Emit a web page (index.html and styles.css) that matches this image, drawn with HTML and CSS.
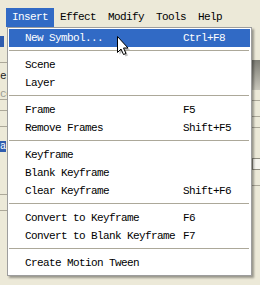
FILE: index.html
```html
<!DOCTYPE html>
<html lang="en">
<head>
    <meta charset="UTF-8">
    <title>Insert Menu</title>
    <link rel="stylesheet" href="styles.css">
</head>
<body>

    <div class="app">
        <!-- Menu bar -->
        <div class="menubar">
            <span class="active">Insert</span>
            <span>Effect</span>
            <span>Modify</span>
            <span>Tools</span>
            <span>Help</span>
        </div>

        <!-- What shows of the window behind the menu -->
        <div class="workspace">
            <div class="left-pane">
                <div class="tab"></div>
                <div class="edge-line"></div>
                <div class="edge-text">e</div>
                <div class="edge-text dim">ce</div>
                <div class="edge-line gap"></div>
                <div class="edge-line"></div>
                <div class="tab second">a</div>
                <div class="edge-line far"></div>
                <div class="edge-line"></div>
            </div>
            <div class="right-pane">
                <div class="shade"></div>
                <div class="edge-line gap"></div>
                <div class="edge-line"></div>
                <div class="edge-line gap"></div>
                <div class="edge-box"></div>
                <div class="edge-line"></div>
            </div>
        </div>

        <!-- Insert dropdown -->
        <div class="dropdown">
            <div class="item selected"><span class="label">New Symbol...</span><span class="key">Ctrl+F8</span></div>
            <div class="sep"></div>
            <div class="item"><span class="label">Scene</span></div>
            <div class="item"><span class="label">Layer</span></div>
            <div class="sep"></div>
            <div class="item"><span class="label">Frame</span><span class="key">F5</span></div>
            <div class="item"><span class="label">Remove Frames</span><span class="key">Shift+F5</span></div>
            <div class="sep"></div>
            <div class="item"><span class="label">Keyframe</span></div>
            <div class="item"><span class="label">Blank Keyframe</span></div>
            <div class="item"><span class="label">Clear Keyframe</span><span class="key">Shift+F6</span></div>
            <div class="sep"></div>
            <div class="item"><span class="label">Convert to Keyframe</span><span class="key">F6</span></div>
            <div class="item"><span class="label">Convert to Blank Keyframe</span><span class="key">F7</span></div>
            <div class="sep"></div>
            <div class="item"><span class="label">Create Motion Tween</span></div>
        </div>

        <!-- Mouse pointer -->
        <svg class="cursor" width="14" height="22" viewBox="0 0 14 22">
            <path d="M2.5 2.5 L2.5 18.5 L6 15 L8.5 20.5 L11 19.5 L8.5 14 L13 14 Z" fill="rgba(0,0,0,0.25)"/>
            <path d="M0.5 0.5 L0.5 16.5 L4 13 L6.5 18.5 L9 17.5 L6.5 12 L11 12 Z" fill="#fff" stroke="#000" stroke-width="1" stroke-linejoin="miter"/>
        </svg>
    </div>

</body>
</html>
```

FILE: styles.css
```css
body {
    margin: 0;
    font-family: "Liberation Mono", "DejaVu Sans Mono", monospace;
    font-size: 11px;
    letter-spacing: -0.6px;
    color: #000;
}

.app {
    position: relative;
    width: 260px;
    height: 285px;
    background-color: #ece9d8;
    overflow: hidden;
}

/* Menu bar */
.menubar {
    display: flex;
    height: 27px;
    padding: 8px 0 0 6px;
    box-sizing: border-box;
    background-color: #ece9d8;
}

.menubar span {
    padding: 0 6px;
    line-height: 19px;
}

.menubar .active {
    background-color: #316ac5;
    color: white;
}

/* Background window */
.workspace {
    display: flex;
    justify-content: space-between;
    height: 258px;
}

.left-pane {
    width: 7px;
    padding-top: 9px;
    color: #222;
}

.tab {
    width: 4px;
    height: 11px;
    background-color: #2f5cae;
    color: white;
    font-size: 10px;
    line-height: 11px;
}

.tab.second {
    margin-top: 14px;
    width: 6px;
}

.edge-line {
    border-top: 1px solid #aca899;
    margin-top: 15px;
}

.edge-line.gap {
    margin-top: 10px;
}

.edge-line.far {
    margin-top: 42px;
}

.edge-text {
    margin-top: 8px;
    line-height: 10px;
}

.edge-text.dim {
    color: #9a9a90;
    border-bottom: 1px solid #aca899;
}

.right-pane {
    width: 8px;
    padding-top: 33px;
}

.shade {
    height: 30px;
    background: linear-gradient(#7d7d75, #c8c6bb);
}

.edge-box {
    margin-top: 30px;
    height: 10px;
    border: 1px solid #8f8d80;
    border-right: none;
    background-color: #f5f4ee;
}

/* Dropdown */
.dropdown {
    position: absolute;
    left: 7px;
    top: 27px;
    width: 245px;
    box-sizing: border-box;
    padding: 1px 1px 3px 1px;
    background-color: white;
    border: 1px solid #9d9d9d;
    box-shadow: 2px 2px 2px rgba(0, 0, 0, 0.35);
}

.item {
    display: flex;
    height: 18px;
    padding-top: 1px;
    box-sizing: border-box;
    line-height: 17px;
    padding-left: 16px;
    white-space: pre;
}

.item .label {
    width: 158px;
}

.item.selected {
    background-color: #316ac5;
    color: white;
}

.sep {
    margin: 3px 1px 5px 0;
    border-top: 1px solid #aca899;
}

.cursor {
    position: absolute;
    left: 117px;
    top: 36px;
}
```
